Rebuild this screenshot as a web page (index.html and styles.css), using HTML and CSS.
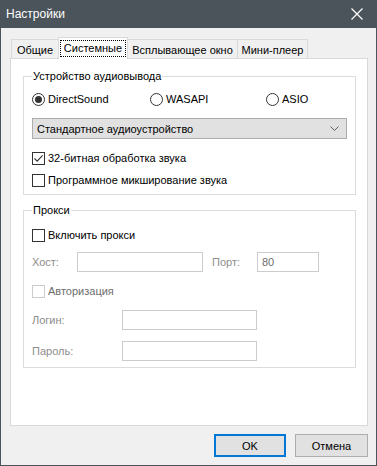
FILE: index.html
```html
<!DOCTYPE html>
<html lang="ru">
<head>
<meta charset="utf-8">
<title>Настройки</title>
<link rel="stylesheet" href="styles.css">
</head>
<body>
<div class="window">
  <div class="titlebar">
    <span class="title">Настройки</span>
    <svg class="close" width="12" height="12" viewBox="0 0 12 12"><path d="M0.5 0.5 L11.5 11.5 M11.5 0.5 L0.5 11.5" stroke="#fff" stroke-width="1.2" fill="none"/></svg>
  </div>
  <div class="content">
    <div class="tabs">
      <div class="tab t1">Общие</div>
      <div class="tab t2 active"><span class="focus">Системные</span></div>
      <div class="tab t3">Всплывающее окно</div>
      <div class="tab t4">Мини-плеер</div>
    </div>
    <div class="panel">
      <fieldset class="group g1">
        <legend>Устройство аудиовывода</legend>
        <div class="radios">
          <label class="opt"><span class="radio on"></span>DirectSound</label>
          <label class="opt"><span class="radio"></span>WASAPI</label>
          <label class="opt"><span class="radio"></span>ASIO</label>
        </div>
        <div class="combo">
          <span>Стандартное аудиоустройство</span>
          <svg width="9" height="5" viewBox="0 0 9 5"><path d="M0.5 0.5 L4.5 4.5 L8.5 0.5" stroke="#606060" stroke-width="1" fill="none"/></svg>
        </div>
        <label class="opt chk1"><span class="check on"><svg width="11" height="11" viewBox="0 0 11 11"><path d="M1.5 5.5 L4.2 8.2 L9.6 2.4" stroke="#333" stroke-width="1.1" fill="none"/></svg></span>32-битная обработка звука</label>
        <label class="opt chk2"><span class="check"></span>Программное микширование звука</label>
      </fieldset>
      <fieldset class="group g2">
        <legend>Прокси</legend>
        <label class="opt chk3"><span class="check"></span>Включить прокси</label>
        <div class="row host">
          <span class="lbl lbl-host">Хост:</span>
          <span class="input w-host"></span>
          <span class="lbl lbl-port">Порт:</span>
          <span class="input w-port">80</span>
        </div>
        <label class="opt disabled chk4"><span class="check"></span>Авторизация</label>
        <div class="row login">
          <span class="lbl lbl-login">Логин:</span>
          <span class="input w-login"></span>
        </div>
        <div class="row pass">
          <span class="lbl lbl-login">Пароль:</span>
          <span class="input w-login"></span>
        </div>
      </fieldset>
    </div>
    <div class="buttons">
      <div class="btn default">OK</div>
      <div class="btn">Отмена</div>
    </div>
  </div>
</div>
</body>
</html>
```
FILE: styles.css
```css
html, body {
  margin: 0;
  padding: 0;
  background: #f0f0f0;
}
body {
  font-family: "Liberation Sans", Arial, sans-serif;
  font-size: 11px;
  color: #000;
}
.window {
  width: 377px;
  height: 466px;
  box-sizing: border-box;
  border: 1px solid #4b545b;
  border-top: none;
  background: #f0f0f0;
  display: flex;
  flex-direction: column;
}
.titlebar {
  height: 27px;
  flex: none;
  background: #4b545b;
  color: #fff;
  display: flex;
  align-items: center;
  justify-content: space-between;
  padding: 0 13px 1px 5px;
  font-size: 12px;
}
.close { display: block; }
.content {
  padding: 9px 8px 0 9px;
  display: flex;
  flex-direction: column;
}
.tabs {
  display: flex;
  align-items: flex-end;
  height: 21px;
  padding-left: 1px;
  white-space: nowrap;
}
.tab {
  box-sizing: border-box;
  height: 19px;
  border: 1px solid #d9d9d9;
  border-bottom: none;
  background: #f0f0f0;
  display: flex;
  align-items: center;
  justify-content: center;
  line-height: 16px;
  padding-top: 1px;
}
.t1 { width: 47px; border-right: none; }
.t2 { width: 70px; }
.t3 { width: 110px; border-left: none; }
.t4 { width: 70px; border-left: none; }
.tab.active {
  height: 22px;
  margin-bottom: -1px;
  background: #fff;
  position: relative;
  z-index: 1;
  align-items: flex-start;
  padding-top: 2px;
}
.focus {
  border: 1px dotted #000;
  height: 15px;
  line-height: 15px;
  width: 64px;
  text-align: center;
}
.panel {
  box-sizing: border-box;
  width: 358px;
  height: 368px;
  border: 1px solid #d9d9d9;
  background: #fff;
  padding: 9px 11px 0 12px;
  display: flex;
  flex-direction: column;
}
.group {
  margin: 0;
  border: 1px solid #dcdcdc;
  padding: 0 0 0 8px;
  min-width: 0;
}
.group legend {
  padding: 0 1px;
  margin-left: 0;
  line-height: 16px;
  height: 16px;
}
.g1 { height: 127px; box-sizing: border-box; }
.g2 { height: 166px; box-sizing: border-box; margin-top: 7px; }
.opt {
  display: flex;
  align-items: center;
  gap: 3px;
  height: 16px;
  line-height: 16px;
}
.radios {
  display: grid;
  grid-template-columns: 118px 116px auto;
  margin-top: 7px;
}
.radio {
  width: 13px;
  height: 13px;
  box-sizing: border-box;
  border: 1px solid #333;
  border-radius: 50%;
  background: #fff;
  display: flex;
  align-items: center;
  justify-content: center;
}
.radio.on::after {
  content: "";
  width: 7px;
  height: 7px;
  border-radius: 50%;
  background: #333;
}
.check {
  width: 13px;
  height: 13px;
  box-sizing: border-box;
  border: 1px solid #333;
  background: #fff;
  display: flex;
  align-items: center;
  justify-content: center;
}
.check svg { display: block; }
.combo {
  box-sizing: border-box;
  width: 315px;
  height: 21px;
  margin-top: 11px;
  border: 1px solid #adadad;
  background: #e1e1e1;
  display: flex;
  align-items: center;
  justify-content: space-between;
  padding: 0 7px 0 4px;
}
.chk1 { margin-top: 11px; }
.chk2 { margin-top: 6px; }
.chk3 { margin-top: 9px; }
.chk4 { margin-top: 11px; }
.disabled { color: #6d6d6d; }
.disabled .check { border-color: #cccccc; }
.row {
  display: flex;
  align-items: center;
  height: 20px;
}
.host { margin-top: 9px; }
.login { margin-top: 11px; }
.pass { margin-top: 11px; }
.lbl { color: #8d8d8d; }
.lbl-host { width: 45px; }
.lbl-port { width: 45px; margin-left: 9px; }
.lbl-login { width: 90px; }
.input {
  box-sizing: border-box;
  height: 20px;
  border: 1px solid #cccccc;
  background: #fff;
  display: flex;
  align-items: center;
  padding-left: 4px;
  color: #6d6d6d;
}
.w-host { width: 126px; }
.w-port { width: 62px; }
.w-login { width: 135px; }
.buttons {
  display: flex;
  justify-content: flex-end;
  gap: 9px;
  margin-top: 8px;
  padding-right: 0;
}
.btn {
  box-sizing: border-box;
  width: 73px;
  height: 23px;
  border: 1px solid #adadad;
  background: #e1e1e1;
  display: flex;
  align-items: center;
  justify-content: center;
}
.btn.default {
  width: 72px;
  border: 2px solid #0078d7;
}
```
